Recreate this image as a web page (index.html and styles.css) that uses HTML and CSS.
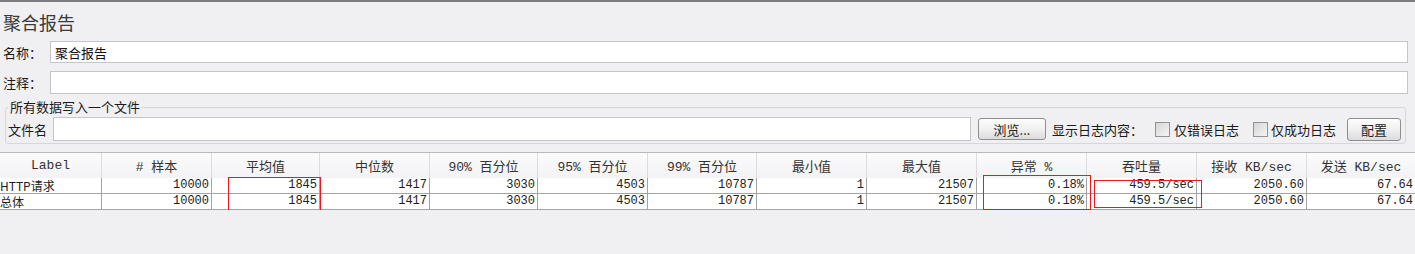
FILE: index.html
```html
<!DOCTYPE html>
<html lang="zh-CN">
<head>
	<meta charset="UTF-8">
	<title>聚合报告</title>
	<link rel="stylesheet" href="styles.css">
</head>
<body>
	<div class="topline"></div>
	<div class="page">
		<div class="title">聚合报告</div>

		<!-- 名称 / 注释 -->
		<div class="row row-name">
			<span class="row-label">名称：</span>
			<input class="text-input" type="text" value="聚合报告">
		</div>
		<div class="row row-comment">
			<span class="row-label">注释：</span>
			<input class="text-input" type="text" value="">
		</div>

		<!-- 写入文件 -->
		<fieldset class="file-box">
			<legend>所有数据写入一个文件</legend>
			<div class="file-row">
				<span class="file-label">文件名</span>
				<input class="text-input file-input" type="text" value="">
				<span class="btn btn-browse">浏览...</span>
				<span class="log-label">显示日志内容：</span>
				<span class="check check-err"></span>
				<span class="check-text">仅错误日志</span>
				<span class="check check-ok"></span>
				<span class="check-text">仅成功日志</span>
				<span class="btn btn-config">配置</span>
			</div>
		</fieldset>
	</div>

	<!-- 结果表格 -->
	<div class="grid-wrap">
		<div class="grid grid-head">
			<div>Label</div>
			<div># 样本</div>
			<div>平均值</div>
			<div>中位数</div>
			<div>90% 百分位</div>
			<div>95% 百分位</div>
			<div>99% 百分位</div>
			<div>最小值</div>
			<div>最大值</div>
			<div>异常 %</div>
			<div>吞吐量</div>
			<div>接收 KB/sec</div>
			<div>发送 KB/sec</div>
		</div>
		<div class="grid grid-row">
			<div class="cell-label">HTTP请求</div>
			<div>10000</div>
			<div>1845</div>
			<div>1417</div>
			<div>3030</div>
			<div>4503</div>
			<div>10787</div>
			<div>1</div>
			<div>21507</div>
			<div>0.18%</div>
			<div>459.5/sec</div>
			<div>2050.60</div>
			<div>67.64</div>
		</div>
		<div class="grid grid-row">
			<div class="cell-label">总体</div>
			<div>10000</div>
			<div>1845</div>
			<div>1417</div>
			<div>3030</div>
			<div>4503</div>
			<div>10787</div>
			<div>1</div>
			<div>21507</div>
			<div>0.18%</div>
			<div>459.5/sec</div>
			<div>2050.60</div>
			<div>67.64</div>
		</div>

		<!-- 红框标注 -->
		<div class="mark mark-avg"></div>
		<div class="mark mark-err"></div>
		<div class="mark mark-tps"></div>
	</div>
</body>
</html>
```

FILE: styles.css
```css
body {
	margin: 0;
	padding: 0;
	background: #f0eff2;
	font-family: "Noto Sans CJK SC", sans-serif;
	font-size: 13px;
	color: #1a1a1a;
	overflow: hidden;
}

.topline {
	height: 2px;
	background: #7d7d7d;
}

.page {
	padding: 0 7px 0 3px;
}

.title {
	padding-top: 8px;
	height: 24px;
	line-height: 24px;
	font-size: 18px;
	color: #3a3a3a;
}

/* 名称、注释输入行 */
.row {
	display: flex;
	align-items: center;
}
.row-name {
	margin-top: 7px;
	height: 22px;
}
.row-comment {
	margin-top: 8px;
	height: 23px;
}
.row-label {
	width: 47px;
	flex: none;
}

.text-input {
	flex: 1;
	min-width: 0;
	height: 100%;
	box-sizing: border-box;
	margin: 0;
	padding: 0 4px;
	border: 1px solid #c6c6c8;
	background: #fff;
	font-family: "Noto Sans CJK SC", sans-serif;
	font-size: 13px;
	color: #111;
	outline: none;
}

/* 写入文件区域 */
.file-box {
	margin: 5px 2px 0 2px;
	padding: 2px 3px 2px 2px;
	border: 1px solid #d7d6da;
	border-radius: 3px;
}
.file-box legend {
	padding: 0 2px;
	margin-left: 0;
	line-height: 16px;
	font-size: 13px;
}

.file-row {
	display: flex;
	align-items: center;
	height: 24px;
}
.file-label {
	width: 45px;
	flex: none;
}
.file-input {
	flex: 1;
}

.btn {
	flex: none;
	box-sizing: border-box;
	display: flex;
	align-items: center;
	justify-content: center;
	border: 1px solid #8e8e8e;
	border-radius: 3px;
	background: linear-gradient(#fdfdfd, #f0f0f0 50%, #dcdcdc);
	font-size: 13px;
	color: #222;
}
.btn-browse {
	width: 68px;
	height: 22px;
	margin: 0 6px 0 7px;
}
.btn-config {
	width: 54px;
	height: 23px;
	margin-left: 11px;
	margin-right: 1px;
}

.log-label {
	flex: none;
	width: 91px;
	margin-right: 12px;
}

.check {
	flex: none;
	width: 13px;
	height: 13px;
	border: 1px solid #939393;
	background: linear-gradient(135deg, #d6d6d6, #f4f4f4);
	margin-right: 4px;
}
.check-ok {
	margin-left: 14px;
	margin-right: 3px;
}
.check-text {
	flex: none;
	width: 65px;
}

/* 结果表格 */
.grid-wrap {
	position: relative;
	margin-top: 8px;
	width: 1416px;
}
.grid {
	display: grid;
	grid-template-columns: 102px 110px 108px 110px 108px 110px 109px 110px 110px 110px 110px 110px 109px;
	font-family: "Liberation Mono", "Noto Sans CJK SC", monospace;
	font-size: 12px;
}
.grid-head {
	height: 25px;
	border-top: 1px solid #b9b9bc;
	background: linear-gradient(#fbfbfc, #f3f3f5);
	color: #333;
	font-size: 13px;
}
.grid-head div {
	display: flex;
	align-items: center;
	justify-content: center;
	border-right: 1px solid #dcdcdf;
	white-space: nowrap;
}
.grid-row {
	height: 15px;
	background: #fff;
	border-bottom: 1px solid #a4a4a4;
	color: #222;
}
.grid-row div {
	line-height: 15px;
	text-align: right;
	padding-right: 2px;
	border-right: 1px solid #a4a4a4;
	white-space: nowrap;
	overflow: hidden;
}
.grid-row .cell-label {
	text-align: left;
	padding-left: 0;
	font-family: "Noto Sans CJK SC", sans-serif;
	font-size: 12px;
}

.mark {
	position: absolute;
	z-index: 2;
	border: 1px solid #f0161e;
}
.mark-avg {
	left: 228px;
	top: 25px;
	width: 91px;
	height: 32px;
}
.mark-err {
	left: 983px;
	top: 23px;
	width: 106px;
	height: 33px;
}
.mark-tps {
	left: 1094px;
	top: 28px;
	width: 106px;
	height: 26px;
}
```
